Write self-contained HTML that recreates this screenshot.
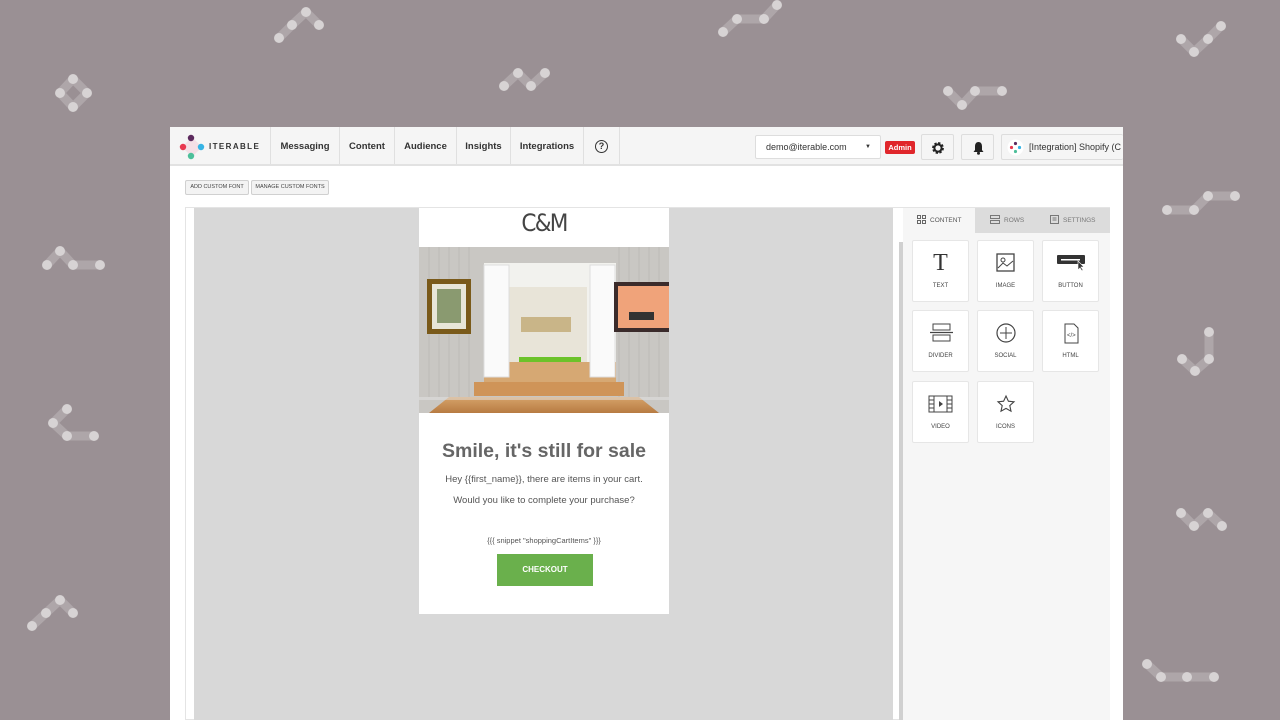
<!DOCTYPE html>
<html><head><meta charset="utf-8"><style>
*{box-sizing:border-box;margin:0;padding:0}
body{width:1280px;height:720px;overflow:hidden;background:#9a9094;font-family:"Liberation Sans",Arial,sans-serif;position:relative}
.abs{position:absolute}
#app{left:170px;top:127px;width:953px;height:593px;background:#fff;overflow:hidden}
#nav{left:0;top:0;width:953px;height:39px;background:#f5f5f5;border-bottom:2px solid #e2e2e2}
.ni{position:absolute;top:0;height:37px;line-height:40px;font-size:9.5px;font-weight:bold;color:#333;text-align:center;border-left:1px solid #e0e0e0}
.btn{position:absolute;border:1px solid #d0d0d0;background:#f3f3f3;border-radius:2px;font-size:5.5px;color:#444;text-align:center;line-height:13px}
.tile{position:absolute;width:57px;height:62px;background:#fff;border:1px solid #e6e6e6;border-radius:2px;text-align:center;font-size:6px;color:#444}
.tile .lb{position:absolute;left:0;right:0;top:42px}
.tile svg{position:absolute;left:17px;top:11px}
.tab{position:absolute;top:81px;height:25px;line-height:25px;font-size:6.5px;color:#777;background:#dcdcdc}
</style></head><body>
<svg class="abs" style="left:0;top:0" width="1280" height="720">
<g fill="none" stroke="rgba(255,255,255,0.2)" stroke-width="9" stroke-linecap="round" stroke-linejoin="round">
<polyline points="279,38 292,25 306,12 319,25"/>
<polygon points="73,79 87,93 73,107 60,93"/>
<polyline points="723,32 737,19 764,19 777,5"/>
<polyline points="504,86 518,73 531,86 545,73"/>
<polyline points="948,91 962,105 975,91 1002,91"/>
<polyline points="1181,39 1194,52 1208,39 1221,26"/>
<polyline points="47,265 60,251 73,265 100,265"/>
<polyline points="67,409 53,423 67,436 94,436"/>
<polyline points="32,626 46,613 60,600 73,613"/>
<polyline points="1167,210 1194,210 1208,196 1235,196"/>
<polyline points="1209,332 1209,359 1195,371 1182,359"/>
<polyline points="1181,513 1194,526 1208,513 1222,526"/>
<polyline points="1147,664 1161,677 1187,677 1214,677"/>
</g>
<g fill="rgba(225,222,223,0.8)">
<circle cx="279" cy="38" r="5"/><circle cx="292" cy="25" r="5"/><circle cx="306" cy="12" r="5"/><circle cx="319" cy="25" r="5"/>
<circle cx="73" cy="79" r="5"/><circle cx="87" cy="93" r="5"/><circle cx="73" cy="107" r="5"/><circle cx="60" cy="93" r="5"/>
<circle cx="723" cy="32" r="5"/><circle cx="737" cy="19" r="5"/><circle cx="764" cy="19" r="5"/><circle cx="777" cy="5" r="5"/>
<circle cx="504" cy="86" r="5"/><circle cx="518" cy="73" r="5"/><circle cx="531" cy="86" r="5"/><circle cx="545" cy="73" r="5"/>
<circle cx="948" cy="91" r="5"/><circle cx="962" cy="105" r="5"/><circle cx="975" cy="91" r="5"/><circle cx="1002" cy="91" r="5"/>
<circle cx="1181" cy="39" r="5"/><circle cx="1194" cy="52" r="5"/><circle cx="1208" cy="39" r="5"/><circle cx="1221" cy="26" r="5"/>
<circle cx="47" cy="265" r="5"/><circle cx="60" cy="251" r="5"/><circle cx="73" cy="265" r="5"/><circle cx="100" cy="265" r="5"/>
<circle cx="67" cy="409" r="5"/><circle cx="53" cy="423" r="5"/><circle cx="67" cy="436" r="5"/><circle cx="94" cy="436" r="5"/>
<circle cx="32" cy="626" r="5"/><circle cx="46" cy="613" r="5"/><circle cx="60" cy="600" r="5"/><circle cx="73" cy="613" r="5"/>
<circle cx="1167" cy="210" r="5"/><circle cx="1194" cy="210" r="5"/><circle cx="1208" cy="196" r="5"/><circle cx="1235" cy="196" r="5"/>
<circle cx="1209" cy="332" r="5"/><circle cx="1209" cy="359" r="5"/><circle cx="1195" cy="371" r="5"/><circle cx="1182" cy="359" r="5"/>
<circle cx="1181" cy="513" r="5"/><circle cx="1194" cy="526" r="5"/><circle cx="1208" cy="513" r="5"/><circle cx="1222" cy="526" r="5"/>
<circle cx="1147" cy="664" r="5"/><circle cx="1161" cy="677" r="5"/><circle cx="1187" cy="677" r="5"/><circle cx="1214" cy="677" r="5"/>
</g></svg>

<div id="app" class="abs">
 <div id="nav" class="abs">
  <svg class="abs" style="left:9px;top:7px" width="26" height="26">
   <polygon points="13,3 23,13 13,23 3,13" fill="#f4dfe6"/>
   <circle cx="12" cy="4" r="3.2" fill="#5c2a5e"/><circle cx="4" cy="13" r="3.2" fill="#e8384f"/>
   <circle cx="22" cy="13" r="3.2" fill="#36b4e5"/><circle cx="12" cy="22" r="3.2" fill="#4dbf9a"/>
  </svg>
  <div class="abs" style="left:39px;top:15px;font-size:8px;font-weight:bold;letter-spacing:1.4px;color:#333">ITERABLE</div>
  <div class="ni" style="left:100px;width:69px">Messaging</div>
  <div class="ni" style="left:169px;width:55px">Content</div>
  <div class="ni" style="left:224px;width:62px">Audience</div>
  <div class="ni" style="left:286px;width:54px">Insights</div>
  <div class="ni" style="left:340px;width:73px">Integrations</div>
  <div class="ni" style="left:413px;width:37px;border-right:1px solid #e0e0e0"><span style="display:inline-block;width:13px;height:13px;border:1.6px solid #333;border-radius:50%;line-height:10px;font-size:9px;vertical-align:middle">?</span></div>
  <div class="abs" style="left:585px;top:8px;width:126px;height:24px;background:#fff;border:1px solid #ddd;border-radius:2px;font-size:9px;color:#333;line-height:22px;padding-left:10px">demo@iterable.com<span style="position:absolute;right:9px;font-size:6px">▼</span></div>
  <div class="abs" style="left:715px;top:14px;width:30px;height:13px;background:#e0262b;border-radius:2px;color:#fff;font-size:7.5px;font-weight:bold;text-align:center;line-height:13px">Admin</div>
  <div class="abs" style="left:751px;top:7px;width:33px;height:26px;background:#f5f5f5;border:1px solid #ddd;border-radius:2px">
   <svg style="position:absolute;left:9px;top:6px" width="14" height="14" viewBox="0 0 14 14"><circle cx="7" cy="7" r="4.6" fill="none" stroke="#222" stroke-width="2.6" stroke-dasharray="2.2 1.4"/><circle cx="7" cy="7" r="3.6" fill="none" stroke="#222" stroke-width="2"/></svg>
  </div>
  <div class="abs" style="left:791px;top:7px;width:33px;height:26px;background:#f5f5f5;border:1px solid #ddd;border-radius:2px">
   <svg style="position:absolute;left:10px;top:6px" width="13" height="14" viewBox="0 0 13 14"><path d="M6.5 1C4 1 3 3 3 5.5V9L1.5 11H11.5L10 9V5.5C10 3 9 1 6.5 1Z" fill="#222"/><circle cx="6.5" cy="12.3" r="1.5" fill="#222"/></svg>
  </div>
  <div class="abs" style="left:831px;top:7px;width:122px;height:26px;background:#f5f5f5;border:1px solid #ddd;border-right:none;border-radius:2px;font-size:9px;color:#333;line-height:24px;padding-left:27px;white-space:nowrap;overflow:hidden">[Integration] Shopify (C
   <svg style="position:absolute;left:5px;top:4px" width="17" height="17"><circle cx="8.5" cy="8.5" r="8" fill="#fff"/><circle cx="8.5" cy="4.5" r="1.6" fill="#5c2a5e"/><circle cx="4.5" cy="8.5" r="1.6" fill="#e8384f"/><circle cx="12.5" cy="8.5" r="1.6" fill="#36b4e5"/><circle cx="8.5" cy="12.5" r="1.6" fill="#4dbf9a"/></svg>
  </div>
 </div>
 <div class="btn" style="left:15px;top:53px;width:64px;height:15px">ADD CUSTOM FONT</div>
 <div class="btn" style="left:81px;top:53px;width:78px;height:15px">MANAGE CUSTOM FONTS</div>

 <div class="abs" style="left:15px;top:80px;width:925px;height:513px;border:1px solid #e4e4e4;background:#fff"></div>
 <div class="abs" style="left:24px;top:81px;width:699px;height:512px;background:#d8d8d8"></div>
 <div class="abs" style="left:729px;top:115px;width:4px;height:478px;background:#d0d0d0"></div>
 <div class="abs" style="left:733px;top:81px;width:207px;height:512px;background:#f6f6f6"></div>
 <div class="tab" style="left:735px;width:70px;background:#f6f6f6;color:#555;padding-left:12px">
  <svg style="vertical-align:-2px;margin-right:4px" width="9" height="9"><g fill="none" stroke="#666"><rect x=".5" y=".5" width="3" height="3"/><rect x="5.5" y=".5" width="3" height="3"/><rect x=".5" y="5.5" width="3" height="3"/><rect x="5.5" y="5.5" width="3" height="3"/></g></svg>CONTENT</div>
 <div class="tab" style="left:805px;width:63px;padding-left:15px">
  <svg style="vertical-align:-2px;margin-right:4px" width="10" height="9"><g fill="none" stroke="#777"><rect x=".5" y=".5" width="9" height="3"/><rect x=".5" y="5.5" width="9" height="3"/></g></svg>ROWS</div>
 <div class="tab" style="left:868px;width:72px;padding-left:12px">
  <svg style="vertical-align:-2px;margin-right:4px" width="9" height="9"><rect x=".5" y=".5" width="8" height="8" fill="none" stroke="#777"/><path d="M2.5 3h4M2.5 5h4" stroke="#777"/></svg>SETTINGS</div>

 <div class="tile" style="left:742px;top:113px"><div style="position:absolute;left:0;right:0;top:9px;font-family:'Liberation Serif',serif;font-size:24px;color:#333">T</div><div class="lb">TEXT</div></div>
 <div class="tile" style="left:807px;top:113px"><svg width="22" height="22"><rect x="2" y="2" width="17" height="17" fill="none" stroke="#444" stroke-width="1.3"/><circle cx="8" cy="8" r="2" fill="none" stroke="#444"/><path d="M3 16l5-5 4 3 6-5" fill="none" stroke="#444"/></svg><div class="lb">IMAGE</div></div>
 <div class="tile" style="left:872px;top:113px"><svg width="30" height="22" style="left:13px"><rect x="1" y="3" width="28" height="9" fill="#333" rx="1"/><rect x="5" y="7" width="19" height="1.5" fill="#fff"/><path d="M22 9l0 9 2-2 2 3 1-1-2-3 3 0z" fill="#333" stroke="#fff" stroke-width=".6"/></svg><div class="lb">BUTTON</div></div>
 <div class="tile" style="left:742px;top:183px"><svg width="24" height="22"><rect x="3" y="2" width="17" height="6" fill="none" stroke="#444"/><path d="M0 10.5h23" stroke="#444" stroke-width="1.3"/><rect x="3" y="13" width="17" height="6" fill="none" stroke="#444"/></svg><div class="lb">DIVIDER</div></div>
 <div class="tile" style="left:807px;top:183px"><svg width="22" height="22"><circle cx="11" cy="11" r="9" fill="none" stroke="#444" stroke-width="1.2"/><path d="M11 5v12M5 11h12" stroke="#444"/></svg><div class="lb">SOCIAL</div></div>
 <div class="tile" style="left:872px;top:183px"><svg width="22" height="22"><path d="M5 2h9l4 4v15H5z" fill="none" stroke="#444"/><text x="7" y="15" font-size="6" fill="#444" font-family="Liberation Sans">&lt;/&gt;</text></svg><div class="lb">HTML</div></div>
 <div class="tile" style="left:742px;top:254px"><svg width="26" height="22" style="left:15px"><rect x="1" y="3" width="23" height="16" fill="none" stroke="#444"/><path d="M6 3v16M19 3v16M1 7h5M1 11h5M1 15h5M19 7h5M19 11h5M19 15h5" stroke="#444"/><path d="M11 8l4 3-4 3z" fill="#444"/></svg><div class="lb">VIDEO</div></div>
 <div class="tile" style="left:807px;top:254px"><svg width="22" height="22"><path d="M11 3l2.4 5.2 5.6.6-4.2 3.8 1.2 5.6L11 15.4 6 18.2l1.2-5.6L3 8.8l5.6-.6z" fill="none" stroke="#444" stroke-width="1.1"/></svg><div class="lb">ICONS</div></div>

 <!-- email -->
 <div class="abs" style="left:249px;top:81px;width:250px;height:406px;background:#fff">
  <div class="abs" style="left:0;right:0;top:1px;text-align:center;font-family:'DejaVu Sans',sans-serif;font-weight:normal;font-size:24px;color:#444;letter-spacing:-2px;transform:scaleX(0.9)">C&amp;M</div>
  <svg class="abs" style="left:0;top:39px" width="250" height="166">
   <defs><linearGradient id="fl" x1="0" y1="0" x2="0" y2="1"><stop offset="0" stop-color="#d6a36a"/><stop offset="1" stop-color="#b77b42"/></linearGradient></defs>
   <rect width="250" height="166" fill="#c9c7c3"/>
   <g stroke="#bdbbb7" stroke-width="1"><path d="M10 0v150M20 0v150M30 0v150M40 0v150M50 0v150M200 0v150M210 0v150M220 0v150M230 0v150M240 0v150"/></g>
   <rect x="65" y="16" width="132" height="118" fill="#f2f2ee"/>
   <rect x="90" y="40" width="78" height="90" fill="#e8e4d8"/>
   <rect x="102" y="70" width="50" height="15" fill="#c9b588"/>
   <rect x="100" y="110" width="62" height="8" fill="#6cc22a"/>
   <rect x="65" y="115" width="132" height="20" fill="#d6a873"/>
   <rect x="65" y="18" width="25" height="112" fill="#fafafa" stroke="#ddd"/>
   <rect x="171" y="18" width="25" height="112" fill="#fafafa" stroke="#ddd"/>
   <rect x="8" y="32" width="44" height="55" fill="#7a5a1a"/><rect x="13" y="37" width="34" height="45" fill="#e8e6d8"/><rect x="18" y="42" width="24" height="34" fill="#8a9a70"/>
   <rect x="195" y="35" width="55" height="50" fill="#3b2b2b"/><rect x="199" y="39" width="51" height="42" fill="#f0a37a"/><rect x="210" y="65" width="25" height="8" fill="#333"/>
   <rect x="55" y="135" width="150" height="14" fill="#cf9458"/>
   <path d="M30 150h190l20 16H10z" fill="url(#fl)"/>
   <rect x="0" y="150" width="250" height="3" fill="#e4e4e4" opacity=".5"/>
  </svg>
  <div class="abs" style="left:0;right:0;top:232px;text-align:center;font-size:19.5px;font-weight:bold;color:#666">Smile, it's still for sale</div>
  <div class="abs" style="left:0;right:0;top:266px;text-align:center;font-size:9.5px;color:#555">Hey {{first_name}}, there are items in your cart.</div>
  <div class="abs" style="left:0;right:0;top:287px;text-align:center;font-size:9.5px;color:#555">Would you like to complete your purchase?</div>
  <div class="abs" style="left:0;right:0;top:328px;text-align:center;font-size:7.5px;color:#555">{{{ snippet "shoppingCartItems" }}}</div>
  <div class="abs" style="left:78px;top:346px;width:96px;height:32px;background:#6ab04c;color:#fff;font-size:8px;font-weight:bold;text-align:center;line-height:32px">CHECKOUT</div>
 </div>
</div>
</body></html>
